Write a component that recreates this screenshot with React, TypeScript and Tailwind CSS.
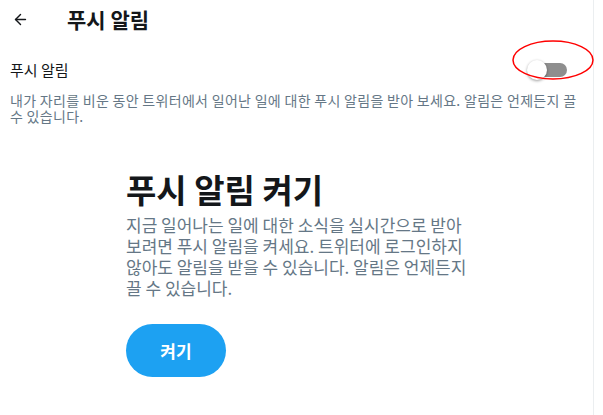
import { ArrowLeft } from "lucide-react";

const kr = { fontFamily: '"Noto Sans CJK KR", "Noto Sans", sans-serif' };

export default function App() {
  return (
    <div className="min-h-screen w-[603px] bg-white break-keep" style={kr}>
      <div className="w-[594px] min-h-[415px] border-r border-[#ebeef0] relative">
        {/* Header */}
        <div className="h-[38px] flex items-center px-[12px]">
          <ArrowLeft className="w-[17px] h-[17px] text-[#14171a]" strokeWidth={2} />
          <h1 className="ml-[38px] text-[21px] font-bold text-[#14171a] leading-none">푸시 알림</h1>
        </div>

        {/* Setting row */}
        <div className="px-[10px] pt-[20px]">
          <div className="flex items-center justify-between h-[24px]">
            <span className="text-[15px] text-[#14171a]">푸시 알림</span>
            <div className="relative mr-[16px] w-[40px] h-[20px] flex items-center">
              <div className="absolute right-0 w-[36px] h-[14px] rounded-full bg-[#8e8e8e]" />
              <div className="absolute left-0 w-[20px] h-[20px] rounded-full bg-white shadow-[0_1px_3px_rgba(0,0,0,0.4)]" />
            </div>
          </div>
          <p className="mt-[10px] text-[14px] leading-[16px] tracking-[0.3px] text-[#657786]">
            내가 자리를 비운 동안 트위터에서 일어난 일에 대한 푸시 알림을 받아 보세요. 알림은 언제든지 끌 수 있습니다.
          </p>
        </div>

        {/* Prompt */}
        <div className="w-[341px] mx-auto mt-[45px]">
          <h2 className="text-[33px] font-bold text-[#14171a] leading-[40px]">푸시 알림 켜기</h2>
          <p className="mt-[5px] text-[17px] leading-[21px] text-[#657786]">
            지금 일어나는 일에 대한 소식을 실시간으로 받아 보려면 푸시 알림을 켜세요. 트위터에 로그인하지 않아도 알림을 받을 수 있습니다. 알림은 언제든지 끌 수 있습니다.
          </p>
          <button className="mt-[26px] w-[100px] h-[53px] rounded-full bg-[#1da1f2] text-white text-[17px] font-bold">
            켜기
          </button>
        </div>

        {/* annotation ellipse */}
        <svg className="absolute left-[511px] top-[39px] pointer-events-none" width="84" height="42">
          <ellipse cx="42" cy="21" rx="40" ry="19" fill="none" stroke="#f00" strokeWidth="1.5" />
        </svg>
      </div>
    </div>
  );
}
